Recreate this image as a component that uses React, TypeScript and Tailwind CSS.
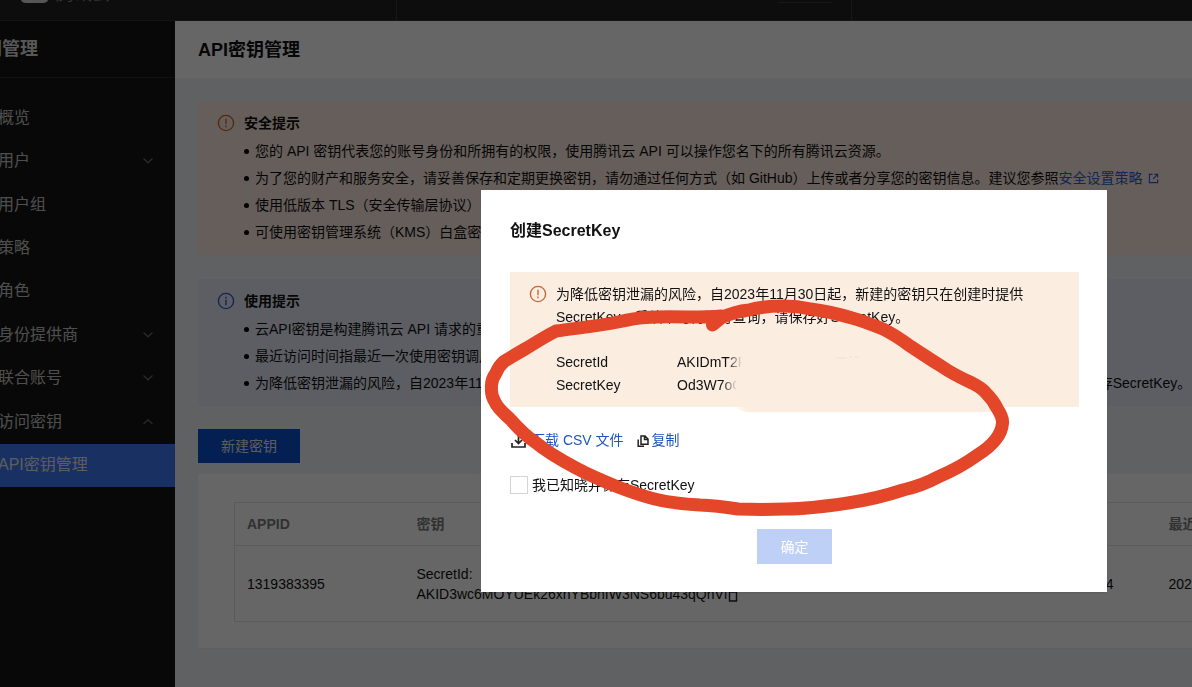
import type { ReactNode } from "react";

type NavItem = { label: string; arrow?: "up" | "down"; active?: boolean };

const navItems: NavItem[] = [
  { label: "概览" },
  { label: "用户", arrow: "down" },
  { label: "用户组" },
  { label: "策略" },
  { label: "角色" },
  { label: "身份提供商", arrow: "down" },
  { label: "联合账号", arrow: "down" },
  { label: "访问密钥", arrow: "up" },
  { label: "API密钥管理", active: true },
];

function Chevron({ up }: { up: boolean }) {
  return (
    <svg className="h-2 w-3 text-[#6a6a6a]" viewBox="0 0 12 8" fill="none" stroke="currentColor" strokeWidth="1.2" aria-hidden="true">
      <path d={up ? "M1.5 6 6 1.8 10.5 6" : "M1.5 1.5 6 5.8 10.5 1.5"} />
    </svg>
  );
}

function WarnIcon({ className }: { className: string }) {
  return (
    <svg className={className} viewBox="0 0 18 18" fill="none" stroke="currentColor" strokeWidth="1.4" aria-hidden="true">
      <circle cx="9" cy="9" r="7.6" />
      <path d="M9 4.8v5.4M9 11.6v1.6" />
    </svg>
  );
}

function InfoIcon({ className }: { className: string }) {
  return (
    <svg className={className} viewBox="0 0 18 18" fill="none" stroke="currentColor" strokeWidth="1.4" aria-hidden="true">
      <circle cx="9" cy="9" r="7.6" />
      <path d="M9 4.8v1.6M9 7.8v5.4" />
    </svg>
  );
}

function Notice({ icon, title, className, children }: { icon: ReactNode; title: string; className: string; children: ReactNode }) {
  return (
    <section className={`flex gap-[9px] py-[9px] pl-[19px] leading-[27px] whitespace-nowrap ${className}`}>
      <div className="pt-1">{icon}</div>
      <div>
        <h2 className="mb-px font-bold">{title}</h2>
        <ul>{children}</ul>
      </div>
    </section>
  );
}

function Bullet({ children }: { children: ReactNode }) {
  return (
    <li className="flex items-center gap-1.5">
      <span className="size-[5px] rounded-full bg-black" />
      <span>{children}</span>
    </li>
  );
}

function Header() {
  return (
    <header className="flex h-[21px] items-start overflow-hidden border-b border-[#333] bg-[#222]">
      <div className="flex h-full w-[397px] shrink-0 items-start gap-2 border-r border-[#3c3c3c] pl-[21px]">
        <svg className="h-[3px] w-[27px]" viewBox="0 0 27 3" aria-hidden="true">
          <path d="M0 0h27c-.5 2-2.500 3-5 3H5C2.500 3 .5 2 0 0Z" fill="#d8d8d8" />
        </svg>
        <span className="-mt-4 text-lg leading-5 text-[#888]">腾讯云</span>
      </div>
      <div className="flex h-full w-[455px] shrink-0 justify-end border-r border-[#3c3c3c] pt-0.5 pr-5">
        <span className="h-px w-[53px] bg-[#3c3c3c]" />
      </div>
    </header>
  );
}

function Sidebar() {
  return (
    <aside className="w-[175px] shrink-0 overflow-hidden bg-[#161616]">
      <div className="flex h-[57px] items-center border-b border-[#2c2c2c]">
        <p className="-ml-[34px] text-lg font-bold whitespace-nowrap text-[#ddd]">访问管理</p>
      </div>
      <nav className="grid h-[409px] auto-rows-fr pt-[18px]">
        {navItems.map((item) => (
          <a
            key={item.label}
            href="#"
            className={`flex items-center justify-between pr-[21px] text-base whitespace-nowrap ${
              item.active ? "bg-[#3c78f5] text-[#e8e8e8]" : "text-[#c4c4c4]"
            }`}
          >
            <span className="-ml-0.5">{item.label}</span>
            {item.arrow && <Chevron up={item.arrow === "up"} />}
          </a>
        ))}
      </nav>
    </aside>
  );
}

function KeyTable() {
  return (
    <div className="mt-[11px] overflow-hidden bg-white pt-7 pb-[26px] pl-9 shadow-xs">
      <table className="w-[1100px] table-fixed border-collapse border border-[#e4e4e4] text-left">
        <colgroup>
          <col className="w-[170px]" />
          <col className="w-[560px]" />
          <col className="w-[192px]" />
          <col />
        </colgroup>
        <thead>
          <tr className="h-[43px] border-b border-[#e4e4e4] text-[#7c7c7c]">
            <th className="px-3 font-bold">APPID</th>
            <th className="px-3 font-bold">密钥</th>
            <th className="px-3 font-bold">创建时间</th>
            <th className="px-3 font-bold">最近访问时间</th>
          </tr>
        </thead>
        <tbody>
          <tr className="h-[76px]">
            <td className="px-3">1319383395</td>
            <td className="px-3 leading-5">
              SecretId:
              <div className="flex items-end">
                AKID3wc6MOYUEk26xnYBbhIW3NS6bu43qQhVf
                <svg className="mb-0.5 size-3" viewBox="0 0 12 12" fill="none" stroke="#222" strokeWidth="1.400" aria-hidden="true">
                  <path d="M1.500 2h7v9h-7z" />
                </svg>
              </div>
            </td>
            <td className="pr-[43px] text-right">2024</td>
            <td className="px-3">2025</td>
          </tr>
        </tbody>
      </table>
    </div>
  );
}

function Content() {
  return (
    <main className="min-w-0 flex-1 overflow-hidden bg-[#f0f3f7]">
      <div className="flex h-[57px] items-center bg-white pl-[23px]">
        <h1 className="text-lg font-bold">API密钥管理</h1>
      </div>
      <div className="pt-[23px] pl-[23px]">
        <Notice title="安全提示" className="bg-[#fdeae0]" icon={<WarnIcon className="size-[18px] text-[#d4682c]" />}>
          <Bullet>您的 API 密钥代表您的账号身份和所拥有的权限，使用腾讯云 API 可以操作您名下的所有腾讯云资源。</Bullet>
          <Bullet>
            为了您的财产和服务安全，请妥善保存和定期更换密钥，请勿通过任何方式（如 GitHub）上传或者分享您的密钥信息。建议您参照
            <a href="#" className="text-[#2a5fd0]">
              安全设置策略
              <svg className="ml-1.5 inline size-[11px] align-[-1px]" viewBox="0 0 12 12" fill="none" stroke="currentColor" strokeWidth="1.200" aria-hidden="true">
                <path d="M5 1.500H1.500v9h9V7M7 1.500h3.500V5M10.500 1.500 5.500 6.500" />
              </svg>
            </a>
          </Bullet>
          <Bullet>使用低版本 TLS（安全传输层协议）调用存在安全风险</Bullet>
          <Bullet>可使用密钥管理系统（KMS）白盒密钥保护您的密钥</Bullet>
        </Notice>
        <Notice title="使用提示" className="mt-6 bg-[#e6ebfa]" icon={<InfoIcon className="size-[18px] text-[#2a5fd0]" />}>
          <Bullet>云API密钥是构建腾讯云 API 请求的重要凭证</Bullet>
          <Bullet>最近访问时间指最近一次使用密钥调用云 API 的时间</Bullet>
          <Bullet>为降低密钥泄漏的风险，自2023年11月30日起，对所有主账号、子账号的密钥，关闭查询 SecretKey的功能，仅支持在创建时查看，请保存SecretKey。</Bullet>
        </Notice>
        <button className="mt-[23px] block h-[34px] w-[102px] bg-[#0a50d0] text-[#e8e8e8]">新建密钥</button>
        <KeyTable />
      </div>
    </main>
  );
}

function Annotation() {
  return (
    <svg className="pointer-events-none absolute inset-0 h-full w-full" viewBox="481 190 626 402" fill="none" aria-hidden="true">
      <defs>
        <linearGradient id="fade" x1="0" x2="1">
          <stop offset="0" stopColor="#fcede1" stopOpacity="0" />
          <stop offset=".05" stopColor="#fcede1" />
          <stop offset="1" stopColor="#fcede1" />
        </linearGradient>
      </defs>
      <path d="M733 405h265v7H748q-8 0-15-7Z" fill="url(#fade)" />
      <path d="M836 358h11m2-1h3m3 0h4" stroke="#f0e0d3" />
      <path
        d="M712.500 325 721 318C729 314 738 311 749 310C760 307 772 306 783 306C793 306 802 307 811 309C826 311 839 314 852 318C863 321 873 325 883 329C893 334 902 340 910 346C921 353 931 360 941 366C951 373 961 378 972 383C978 386 982 388 986 393C990 397 994 402 997 408C1000 413 1003 418 1002.500 423C1002 429 1000 434 996 439C991 446 984 451 976 456C965 464 952 471 938 477C927 483 916 487 903 490C885 496 868 500 848 503C828 506 807 509 786 509C770 509.500 754 509.500 738 509C725 507 713 505.500 700 505C685 504 672 503 659 500C645 497 631 492 618 487C603 481 589 475 576 468C561 460 547 452 535 442C526 436 518 428 511 420C505 414 498 409 495 402C492 397 491 393 491.500 388C491 383 493 377 496 373C498 368 500 365 504 361.500C511 357 518 353 525 349C535 343 546 336 556 331C577 328 598 326 618 322C627 320 636 318 645 317.500C659 316.500 673 316.500 687 317C694 317 712 317 721 316"
        stroke="#e34628"
        strokeWidth="13"
        strokeLinecap="round"
        strokeLinejoin="round"
      />
    </svg>
  );
}

function SecretDialog() {
  return (
    <div className="fixed inset-0 flex items-start justify-end bg-black/60 pt-[190px] pr-[85px]">
      <div role="dialog" aria-modal="true" aria-labelledby="dialog-title" className="relative w-[626px] bg-white pt-[29px] pr-7 pb-7 pl-[29px] shadow">
        <h2 id="dialog-title" className="text-base leading-6 font-bold">
          创建SecretKey
        </h2>
        <div className="mt-[29px] flex gap-[9px] bg-[#fcede1] px-[19px] pt-[11px] pb-2.5 leading-[23px]">
          <WarnIcon className="mt-0.5 size-[18px] shrink-0 text-[#c9673a]" />
          <div>
            <p className="whitespace-nowrap">
              为降低密钥泄漏的风险，自2023年11月30日起，新建的密钥只在创建时提供
              <br />
              SecretKey，后续不可再进行查询，请保存好SecretKey。
            </p>
            <dl className="mt-[22px] grid grid-cols-[121px_auto]">
              <dt>SecretId</dt>
              <dd className="justify-self-start [mask-image:linear-gradient(to_right,black_74%,transparent_94%)]">AKIDmT2F</dd>
              <dt>SecretKey</dt>
              <dd className="justify-self-start [mask-image:linear-gradient(to_right,black_70%,transparent_92%)]">Od3W7oC</dd>
            </dl>
          </div>
        </div>
        <div className="mt-[22px] flex items-center gap-[13px] leading-[23px] text-[#1f54c0]">
          <a href="#" className="flex items-center gap-1">
            <svg className="size-[17px] text-[#222]" viewBox="0 0 17 17" fill="none" stroke="currentColor" strokeWidth="1.700" aria-hidden="true">
              <path d="M2 11v4h13v-4M8.500 2v9M5 8l3.500 3.500L12 8" />
            </svg>
            下载 CSV 文件
          </a>
          <button className="flex items-center gap-[3px]">
            <svg className="size-3 text-[#222]" viewBox="0 0 12 12" fill="none" stroke="currentColor" strokeWidth="1.500" aria-hidden="true">
              <path d="M4 1h4l3 3v5.200H4ZM7.500 1v3.500H11M1.200 4.500v6.700H7" />
            </svg>
            复制
          </button>
        </div>
        <label className="mt-[22px] flex items-center gap-1 leading-[22px]">
          <input type="checkbox" className="size-[18px] appearance-none border border-[#d4d4d4] bg-white" />
          我已知晓并保存SecretKey
        </label>
        <button disabled className="mx-auto mt-[33px] block h-[35px] w-[75px] bg-[#bfd0f7] text-white">
          确定
        </button>
        <Annotation />
      </div>
    </div>
  );
}

export default function App() {
  return (
    <div className="flex h-screen flex-col overflow-hidden font-['Liberation_Sans','Noto_Sans_CJK_SC',sans-serif] text-sm text-[#111]">
      <Header />
      <div className="flex min-h-0 flex-1">
        <Sidebar />
        <Content />
      </div>
      <SecretDialog />
    </div>
  );
}
